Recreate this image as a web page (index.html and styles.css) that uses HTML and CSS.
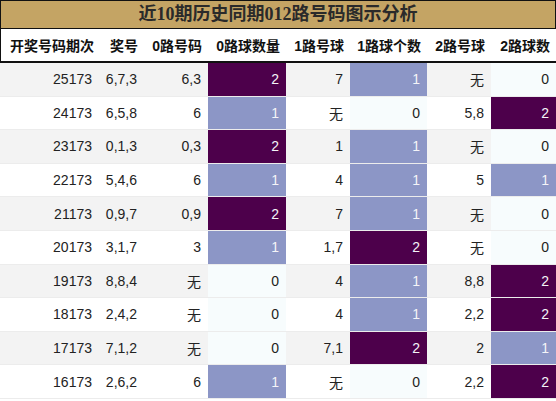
FILE: index.html
```html
<!DOCTYPE html>
<html lang="zh">
<head>
<meta charset="utf-8">
<title>近10期历史同期012路号码图示分析</title>
<link rel="stylesheet" href="styles.css">
</head>
<body>
<div class="board">
  <div class="title">近10期历史同期012路号码图示分析</div>
  <div class="row head">
    <div>开奖号码期次</div><div>奖号</div><div>0路号码</div><div>0路球数量</div><div>1路号球</div><div>1路球个数</div><div>2路号球</div><div>2路球数</div>
  </div>
  <div class="row odd"><div>25173</div><div>6,7,3</div><div>6,3</div><div class="c2">2</div><div>7</div><div class="c1">1</div><div>无</div><div class="c0">0</div></div>
  <div class="row"><div>24173</div><div>6,5,8</div><div>6</div><div class="c1">1</div><div>无</div><div class="c0">0</div><div>5,8</div><div class="c2">2</div></div>
  <div class="row odd"><div>23173</div><div>0,1,3</div><div>0,3</div><div class="c2">2</div><div>1</div><div class="c1">1</div><div>无</div><div class="c0">0</div></div>
  <div class="row"><div>22173</div><div>5,4,6</div><div>6</div><div class="c1">1</div><div>4</div><div class="c1">1</div><div>5</div><div class="c1">1</div></div>
  <div class="row odd"><div>21173</div><div>0,9,7</div><div>0,9</div><div class="c2">2</div><div>7</div><div class="c1">1</div><div>无</div><div class="c0">0</div></div>
  <div class="row"><div>20173</div><div>3,1,7</div><div>3</div><div class="c1">1</div><div>1,7</div><div class="c2">2</div><div>无</div><div class="c0">0</div></div>
  <div class="row odd"><div>19173</div><div>8,8,4</div><div>无</div><div class="c0">0</div><div>4</div><div class="c1">1</div><div>8,8</div><div class="c2">2</div></div>
  <div class="row"><div>18173</div><div>2,4,2</div><div>无</div><div class="c0">0</div><div>4</div><div class="c1">1</div><div>2,2</div><div class="c2">2</div></div>
  <div class="row odd"><div>17173</div><div>7,1,2</div><div>无</div><div class="c0">0</div><div>7,1</div><div class="c2">2</div><div>2</div><div class="c1">1</div></div>
  <div class="row"><div>16173</div><div>2,6,2</div><div>6</div><div class="c1">1</div><div>无</div><div class="c0">0</div><div>2,2</div><div class="c2">2</div></div>
</div>
</body>
</html>
```
FILE: styles.css
```css
html, body {
  margin: 0;
  padding: 0;
  background: #ffffff;
}
.board {
  width: 556px;
  font-family: "Liberation Sans", "Noto Sans CJK SC", sans-serif;
  font-size: 14px;
  color: #222222;
}
.title {
  box-sizing: border-box;
  height: 29px;
  border: 1px solid #111111;
  background: #c4a464;
  text-align: center;
  font-family: "Liberation Serif", "Noto Sans CJK SC", serif;
  font-weight: bold;
  font-size: 18px;
  line-height: 26px;
  color: #2a2a2a;
}
.row {
  display: grid;
  grid-template-columns: 99px 45px 64px 78px 64px 77px 64px 65px;
  box-sizing: border-box;
  height: 33.6px;
  border-bottom: 1px solid #ececec;
  background: #ffffff;
}
.row.odd {
  background: #f3f3f3;
}
.row > div {
  display: flex;
  align-items: center;
  justify-content: flex-end;
  padding-right: 7px;
}
.row.head {
  height: 34px;
  border-left: 1px solid #111111;
  border-bottom: 2px solid #111111;
  font-weight: bold;
  color: #111111;
}
.row.head > div:first-child {
  padding-right: 6px;
}
.c0 {
  background: #f7fcfd;
  color: #222222;
}
.c1 {
  background: #8c96c6;
  color: #f4f4f8;
}
.c2 {
  background: #4d004b;
  color: #f4f4f8;
}
```
